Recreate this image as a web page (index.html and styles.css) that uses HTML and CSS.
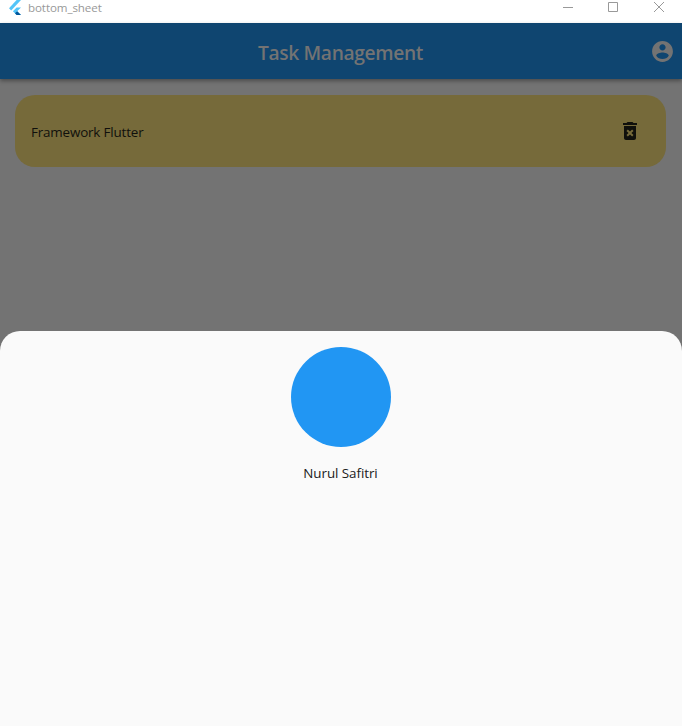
FILE: index.html
```html
<!DOCTYPE html>
<html lang="en">
<head>
<meta charset="utf-8">
<title>bottom_sheet</title>
<link rel="stylesheet" href="styles.css">
</head>
<body>
<div class="window">
  <header class="titlebar">
    <svg class="logo" viewBox="0 0 14 18" width="14" height="18">
      <path d="M8.6 0H13L3.2 10.6 1 8.3z" fill="#54c5f8"/>
      <path d="M8.6 7.4H13L9.2 11.3 13 15H8.6L4.9 11.3z" fill="#54c5f8"/>
      <path d="M7 13.3 9.2 11.3 13 15H8.6z" fill="#01579b"/>
    </svg>
    <span class="window-name">bottom_sheet</span>
    <svg class="controls" viewBox="0 0 102 11" width="102" height="11" fill="none" stroke="#999">
      <path d="M0 5.500h10M45.500 .5h9v9h-9z"/>
      <path d="M91 0l10 10M101 0L91 10"/>
    </svg>
  </header>
  <div class="appbar">
    <h1 class="title">Task Management</h1>
    <svg class="account" viewBox="0 0 24 24" width="25" height="25">
      <path fill="#737373" d="M12 2C6.480 2 2 6.480 2 12s4.480 10 10 10 10-4.480 10-10S17.520 2 12 2zm0 3c1.660 0 3 1.340 3 3s-1.340 3-3 3-3-1.340-3-3 1.340-3 3-3zm0 14.200c-2.500 0-4.710-1.280-6-3.220.03-1.990 4-3.080 6-3.080 1.990 0 5.970 1.090 6 3.080-1.290 1.940-3.500 3.220-6 3.220z"/>
    </svg>
  </div>
  <main class="content">
    <div class="task">
      <span class="task-name">Framework Flutter</span>
      <svg class="trash" viewBox="0 0 24 24" width="24" height="24">
        <path fill="#10100c" d="M6 19c0 1.100.9 2 2 2h8c1.100 0 2-.9 2-2V7H6v12zm2.460-7.120l1.410-1.410L12 12.590l2.120-2.120 1.410 1.410L13.410 14l2.120 2.120-1.410 1.410L12 15.410l-2.120 2.120-1.410-1.410L10.590 14l-2.130-2.120zM15.500 4l-1-1h-5l-1 1H5v2h14V4z"/>
      </svg>
    </div>
  </main>
  <section class="sheet">
    <div class="avatar"></div>
    <span class="person">Nurul Safitri</span>
  </section>
</div>
</body>
</html>
```

FILE: styles.css
```css
* { box-sizing: border-box; }
body { margin: 0; font-family: "Open Sans", "Noto Sans", sans-serif; }
.window { display: flex; flex-direction: column; width: 682px; height: 726px; overflow: hidden; background: #737373; }
.titlebar { display: flex; flex: 0 0 23px; align-items: flex-start; padding: 0 17px 0 8px; background: #fff; }
.logo { flex: none; }
.window-name { margin-left: 6px; font-size: 11.6px; line-height: 16px; color: #999; letter-spacing: -0.1px; }
.controls { margin: 2px 0 0 auto; }
.appbar { display: grid; grid-template-columns: 1fr auto 1fr; flex: 0 0 56px; align-items: center; padding: 0 7px 0 8px; background: #0f4570; box-shadow: 0 2px 4px rgba(0, 0, 0, .35); }
.title { grid-column: 2; margin: 4px 2px 0 0; font-size: 19.2px; line-height: 28px; font-weight: 650; letter-spacing: -0.35px; color: #737373; white-space: nowrap; }
.account { justify-self: end; }
.content { flex: 0 0 252.4px; padding: 16px 16px 0 15px; }
.task { display: flex; align-items: center; justify-content: space-between; height: 72px; padding: 0 24px 0 16px; border-radius: 20px; background: #766a3a; }
.task-name { margin-top: 2px; font-size: 13.4px; line-height: 20px; letter-spacing: -0.16px; color: #10100c; }
.sheet { display: flex; flex: 1; flex-direction: column; align-items: center; padding: 16px 1px 0 0; border-radius: 20px 20px 0 0; background: #fafafa; }
.avatar { flex: none; width: 100px; height: 100px; border-radius: 50%; background: #2196f3; }
.person { margin-top: 16px; font-size: 13.4px; line-height: 20px; letter-spacing: -0.06px; color: #202020; }
```
